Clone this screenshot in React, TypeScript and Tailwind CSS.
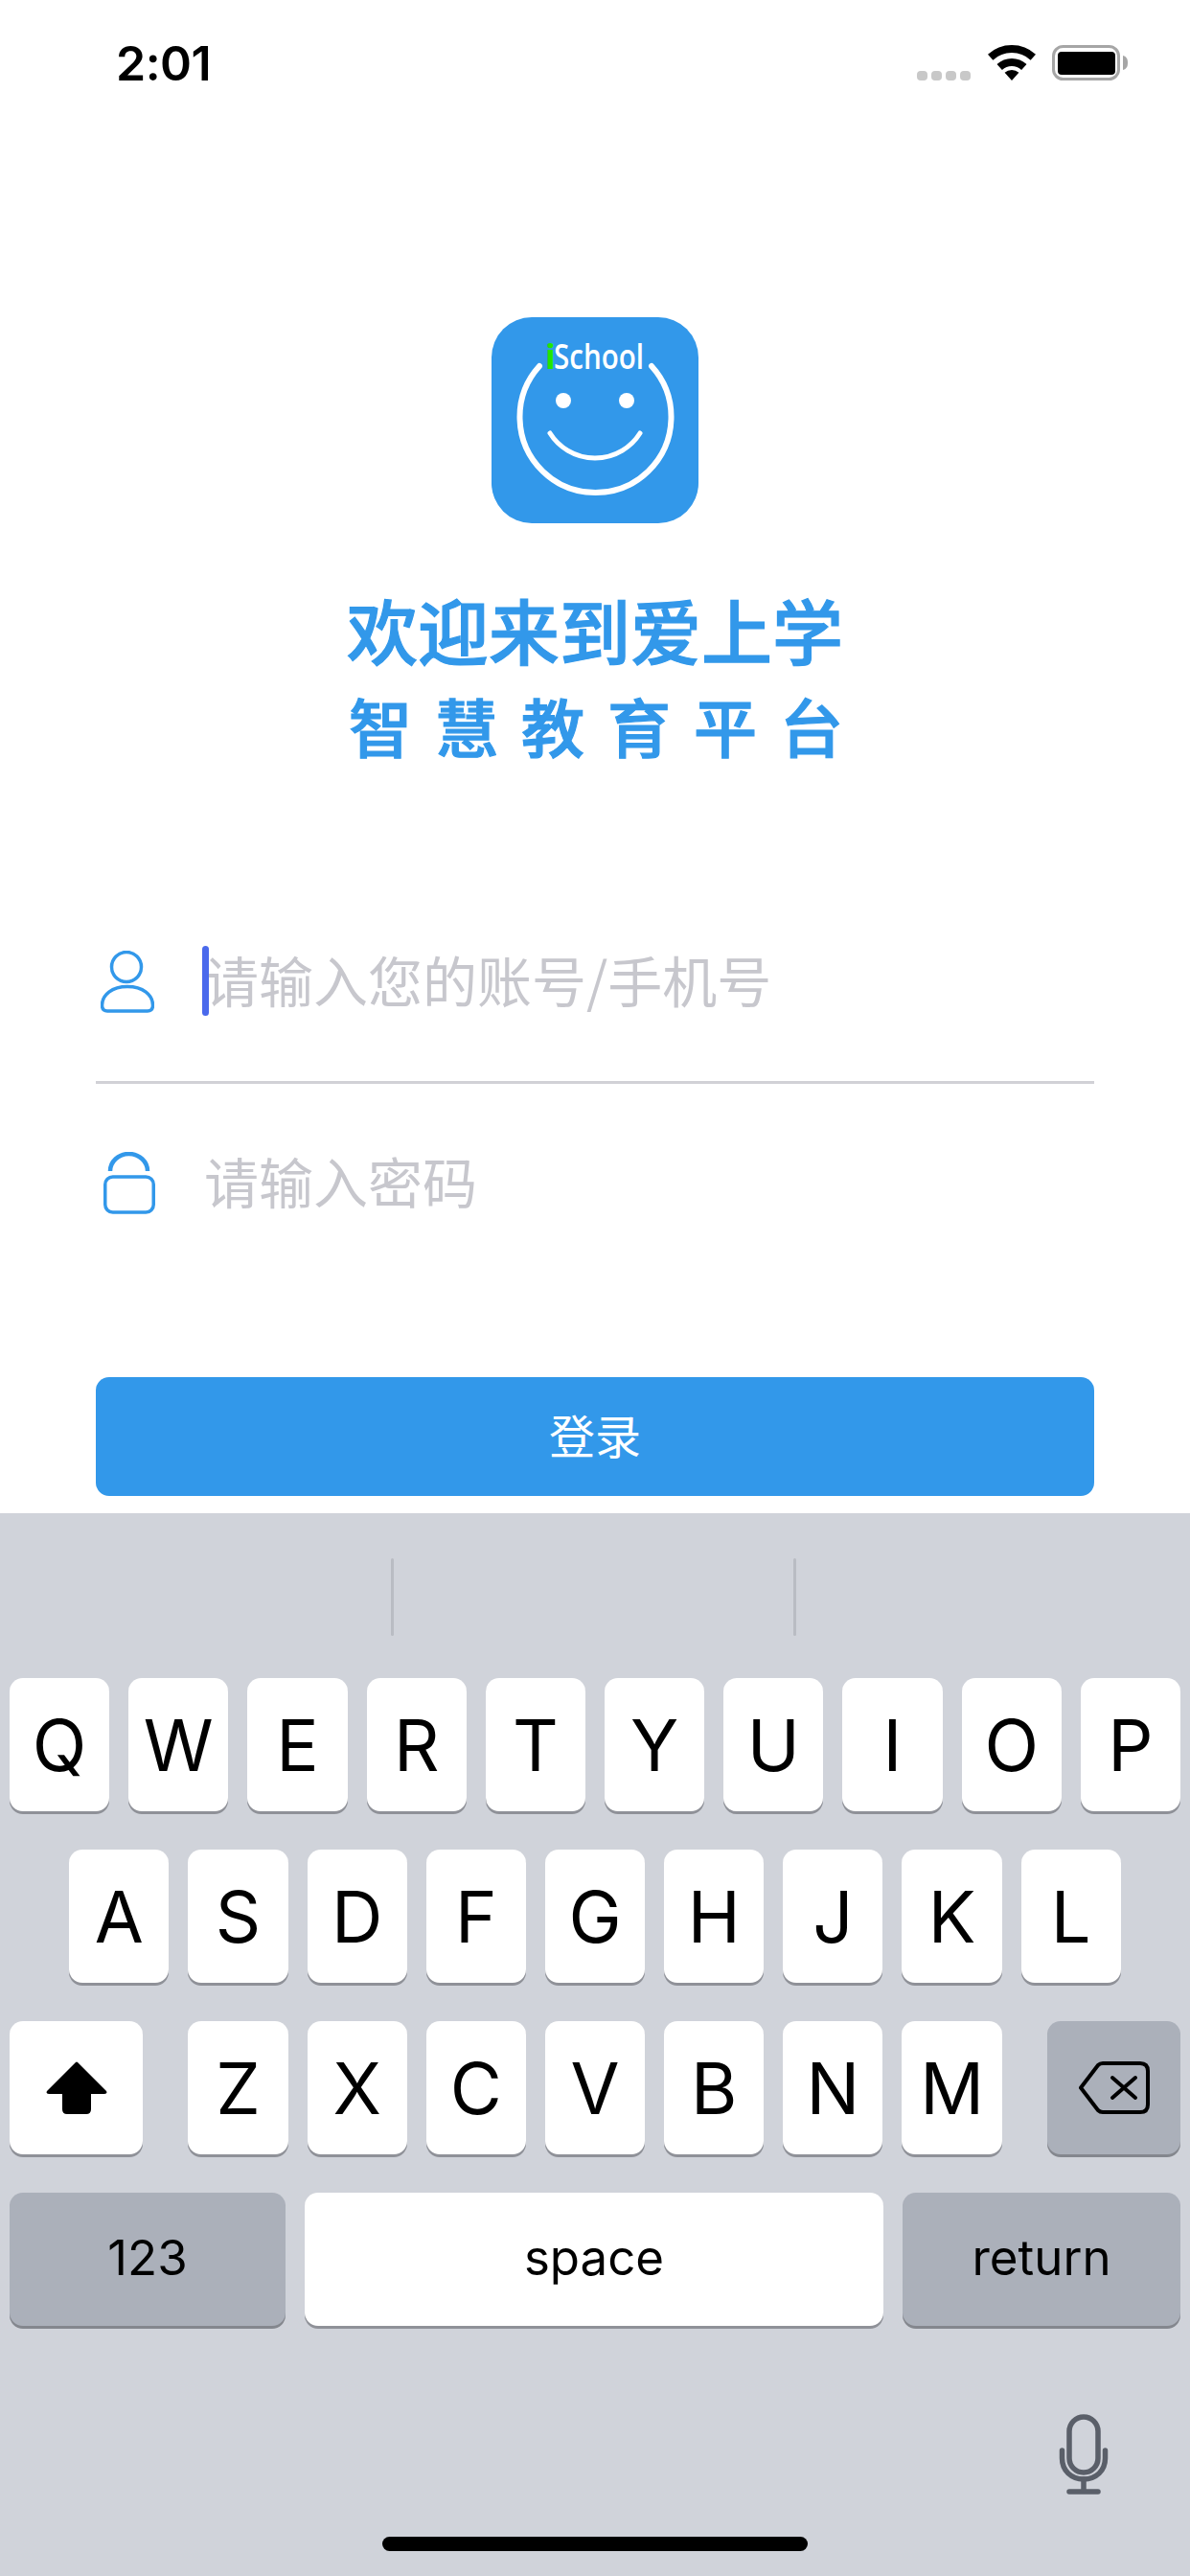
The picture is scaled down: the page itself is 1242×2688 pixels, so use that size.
const CJK = "font-['Noto_Sans_CJK_SC','Noto_Sans',sans-serif]";

function Key({ label, kind = "light", className = "", children }: { label?: string; kind?: "light" | "dark"; className?: string; children?: React.ReactNode }) {
  const bg = kind === "light" ? "bg-white shadow-[0_3px_0_#8f9198]" : "bg-[#abb0ba] shadow-[0_3px_0_#84878e]";
  return (
    <div className={`h-[139px] rounded-[14px] flex items-center justify-center text-black font-['Inter',sans-serif] ${bg} ${className}`}>
      {label ? <span className="text-[74px] leading-none font-normal">{label}</span> : children}
    </div>
  );
}

function Wifi() {
  return (
    <svg width="50" height="37" viewBox="0 0 50 37" fill="none">
      <path d="M25 37 L17.6 28.8 A11 11 0 0 1 32.4 28.8 Z" fill="#000" />
      <path d="M12.2 23 A19 19 0 0 1 37.8 23" stroke="#000" strokeWidth="8" />
      <path d="M2.7 12.7 A33 33 0 0 1 47.3 12.7" stroke="#000" strokeWidth="8" />
    </svg>
  );
}

function Battery() {
  return (
    <svg width="80" height="37" viewBox="0 0 80 37" fill="none">
      <rect x="1.5" y="1.5" width="68" height="34" rx="10" stroke="#a6a6a6" strokeWidth="3" />
      <rect x="6" y="7" width="60" height="24" rx="4" fill="#000" />
      <path d="M74 11 C78 12 79 15 79 18.5 C79 22 78 25 74 26 Z" fill="#a6a6a6" />
    </svg>
  );
}

function Logo() {
  return (
    <svg width="216" height="215" viewBox="0 0 216 215" fill="none">
      <rect width="216" height="215" rx="42" fill="#3298ea" />
      <path d="M50 51 A79 79 0 1 0 167 51" stroke="#fff" strokeWidth="6" strokeLinecap="round" />
      <ellipse cx="75" cy="87" rx="8" ry="8" fill="#fff" />
      <ellipse cx="141" cy="87" rx="8" ry="8" fill="#fff" />
      <path d="M61 121 A55.5 55.5 0 0 0 155 121" stroke="#fff" strokeWidth="5" strokeLinecap="round" />
      <text x="56" y="54" fontFamily="'Open Sans', sans-serif" fontSize="36" fontWeight="700" fill="#22e600">i</text>
      <text x="65" y="54" fontFamily="'Open Sans', sans-serif" fontSize="36" fontWeight="600" fill="#fff" textLength="94" lengthAdjust="spacingAndGlyphs">School</text>
    </svg>
  );
}

function UserIcon() {
  return (
    <svg width="56" height="65" viewBox="0 0 56 65" fill="none" stroke="#3298ea" strokeWidth="3.5">
      <circle cx="27" cy="17" r="15.5" />
      <path d="M7 63 H49 Q54.5 63 54.5 57 C54.5 46 44 37.5 28 37.5 C12 37.5 1.5 46 1.5 57 Q1.5 63 7 63 Z" />
    </svg>
  );
}

function LockIcon() {
  return (
    <svg width="54" height="65" viewBox="0 0 54 65" fill="none" stroke="#3298ea" strokeWidth="3.5">
      <rect x="1.75" y="26" width="50.5" height="37" rx="8" />
      <path d="M7 20 A19.5 18 0 0 1 46 20" strokeWidth="4.5" />
    </svg>
  );
}

function Backspace() {
  return (
    <svg width="74" height="55" viewBox="0 0 74 55" fill="none" stroke="#000" strokeWidth="4">
      <path d="M25 2 H64 Q72 2 72 10 V45 Q72 53 64 53 H25 Q22 53 20 51 L2 27.5 L20 4 Q22 2 25 2 Z" strokeLinejoin="round" />
      <path d="M35 17 L59 38 M59 17 L35 38" strokeLinecap="round" />
    </svg>
  );
}

function Shift() {
  return (
    <svg width="64" height="56" viewBox="0 0 64 56" fill="#000">
      <path d="M31 1 Q32 0 33 1 L63 31 Q64.5 34 61 34 H47 V50 Q47 55 42 55 H22 Q17 55 17 50 V34 H3 Q-0.5 34 1 31 Z" />
    </svg>
  );
}

function Mic() {
  return (
    <svg width="52" height="84" viewBox="0 0 52 84" fill="none" stroke="#5a5f69" strokeWidth="5.5" strokeLinecap="round">
      <rect x="11" y="3" width="30" height="58" rx="15" />
      <path d="M3.5 38 V46 C3.5 59 13 68 26 68 C39 68 48.5 59 48.5 46 V38" />
      <path d="M26 68 V81 M11 81 H41" />
    </svg>
  );
}

export default function App() {
  return (
    <div className="w-[1242px] h-[2688px] bg-white flex flex-col overflow-hidden">
      <div className="h-[130px] pl-[121px] pr-[64px] pt-[36px] flex justify-between items-start">
        <span className="font-['Inter',sans-serif] text-[50px] leading-[60px] font-semibold text-black tracking-[-0.5px]">2:01</span>
        <div className="flex items-end pt-[11px]">
          <div className="flex gap-[4px] mr-[18px]">
            <div className="w-[11px] h-[10px] rounded-[4px] bg-[#c8c8c8]" />
            <div className="w-[11px] h-[10px] rounded-[4px] bg-[#c8c8c8]" />
            <div className="w-[11px] h-[10px] rounded-[4px] bg-[#c8c8c8]" />
            <div className="w-[11px] h-[10px] rounded-[4px] bg-[#c8c8c8]" />
          </div>
          <div className="mr-[17px] flex"><Wifi /></div>
          <div className="flex"><Battery /></div>
        </div>
      </div>

      <div className="mt-[201px] flex justify-center"><Logo /></div>

      <h1 className={`mt-[73px] text-center text-[74px] leading-[74px] font-medium text-[#3298ea] [-webkit-text-stroke:1.2px_#3298ea] ${CJK}`}>欢迎来到爱上学</h1>
      <p className={`mt-[30px] text-center text-[66px] leading-[66px] font-medium tracking-[24px] pl-[26px] text-[#3298ea] [-webkit-text-stroke:1.2px_#3298ea] ${CJK}`}>智慧教育平台</p>

      <div className="mt-[132px] mx-[100px] flex flex-col">
        <div className="h-[210px] border-b-[3px] border-[#d1d1d6] flex items-center">
          <div className="w-[113px] pl-[5px] flex"><UserIcon /></div>
          <div className="relative">
            <span className={`block pb-[8px] text-[57px] leading-[80px] text-[#c7c7cd] ${CJK}`}>请输入您的账号/手机号</span>
            <div className="absolute left-[-2px] top-[6px] w-[7px] h-[73px] rounded-full bg-[#4a69ec]" />
          </div>
        </div>
        <div className="h-[207px] flex items-center">
          <div className="w-[113px] pl-[8px] flex"><LockIcon /></div>
          <span className={`block pb-[8px] text-[57px] leading-[80px] text-[#c7c7cd] ${CJK}`}>请输入密码</span>
        </div>
      </div>

      <button className={`mt-[99px] mx-[100px] h-[124px] rounded-[14px] pb-[6px] bg-[#3298ea] text-white text-[48px] ${CJK}`}>登录</button>

      <div className="mt-[18px] flex-1 bg-[#d0d3da] flex flex-col">
        <div className="h-[172px] pt-[47px] flex justify-center gap-[417px] pr-[4px]">
          <div className="w-[3px] h-[81px] rounded-full bg-[#b9bcc3]" />
          <div className="w-[3px] h-[81px] rounded-full bg-[#b9bcc3]" />
        </div>
        <div className="flex flex-col gap-[40px]">
          <div className="flex gap-[20px] px-[10px]">
            {["Q", "W", "E", "R", "T", "Y", "U", "I", "O", "P"].map((k) => (
              <Key key={k} label={k} className="flex-1" />
            ))}
          </div>
          <div className="flex gap-[20px] justify-center">
            {["A", "S", "D", "F", "G", "H", "J", "K", "L"].map((k) => (
              <Key key={k} label={k} className="w-[104.2px]" />
            ))}
          </div>
          <div className="flex justify-between px-[10px]">
            <Key className="w-[139px]"><Shift /></Key>
            <div className="flex gap-[20px]">
              {["Z", "X", "C", "V", "B", "N", "M"].map((k) => (
                <Key key={k} label={k} className="w-[104.2px]" />
              ))}
            </div>
            <Key kind="dark" className="w-[139px]"><Backspace /></Key>
          </div>
          <div className="flex gap-[20px] px-[10px]">
            <Key kind="dark" className="w-[288px]"><span className="block pb-[5px] text-[51px] leading-none">123</span></Key>
            <Key className="flex-1"><span className="block pb-[5px] text-[51px] leading-none">space</span></Key>
            <Key kind="dark" className="w-[290px]"><span className="block pb-[5px] text-[51px] leading-none">return</span></Key>
          </div>
        </div>
        <div className="mt-[92px] pr-[85px] flex justify-end"><Mic /></div>
        <div className="mt-[44px] mx-auto w-[444px] h-[15px] rounded-full bg-black" />
      </div>
    </div>
  );
}
